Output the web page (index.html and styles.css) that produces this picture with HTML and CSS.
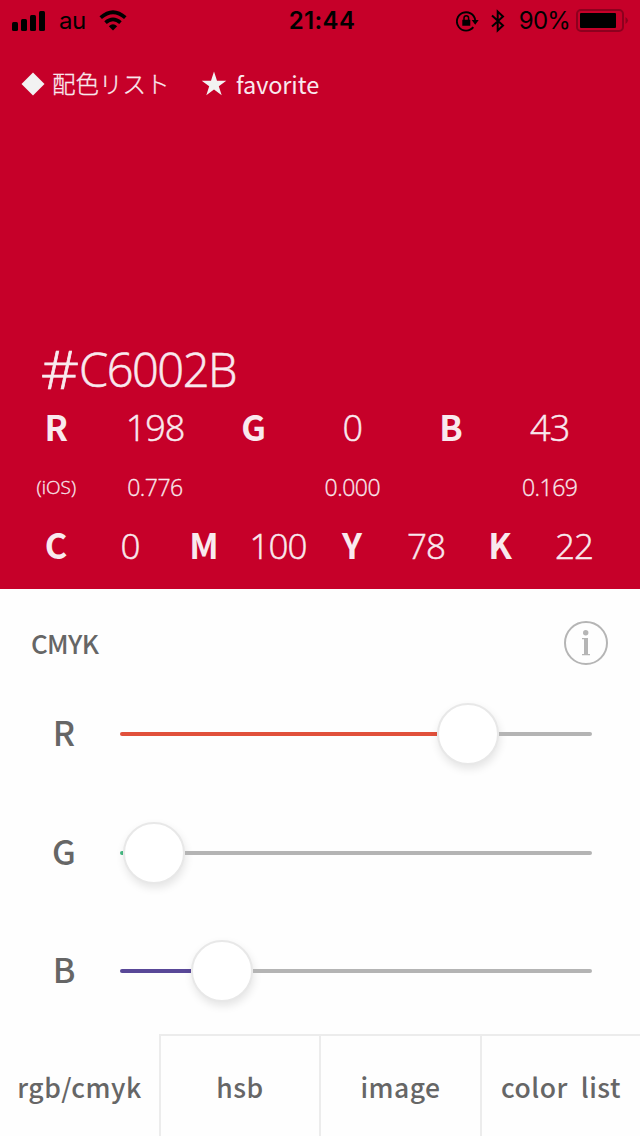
FILE: index.html
```html
<!DOCTYPE html>
<html lang="ja">
<head>
<meta charset="utf-8">
<title>Color</title>
<link rel="stylesheet" href="styles.css">
</head>
<body>
<div class="app">
  <section class="hero">
    <header class="status">
      <div class="status-left">
        <svg class="signal" width="34" height="20" viewBox="0 0 34 20"><rect x="0" y="11" width="6" height="9" rx="1.5"/><rect x="9" y="8" width="6" height="12" rx="1.5"/><rect x="18" y="4" width="6" height="16" rx="1.5"/><rect x="27" y="0" width="6" height="20" rx="1.5"/></svg>
        <span class="carrier">au</span>
        <svg class="wifi" width="28" height="21" viewBox="0 0 28 21"><path d="M14 20.5 9.8 16.2Q14 12.4 18.2 16.2Z"/><path d="M6.500 12.600Q14 6.100 21.500 12.600M1.700 7.700Q14-3.300 26.300 7.700" fill="none" stroke="#000" stroke-width="3.7"/></svg>
      </div>
      <span class="clock">21:44</span>
      <div class="status-right">
        <svg class="lock" width="24" height="22" viewBox="0 0 24 22"><path d="M17.300 17.200A9.200 9.200 0 1 1 19.200 10" fill="none" stroke="#000" stroke-width="1.9"/><path d="M15.700 10h7l-3.500 4.800zM6.300 9.700h8v6h-8z"/><path d="M8 10V8a2.300 2.300 0 0 1 4.600 0v2" fill="none" stroke="#000" stroke-width="1.5"/></svg>
        <svg class="bluetooth" width="16" height="24" viewBox="0 0 16 24"><path d="m2 6.500 11 10-5.300 5V2.500l5.300 5-11 10" fill="none" stroke="#000" stroke-width="2"/></svg>
        <span class="percent">90%</span>
        <svg class="battery" width="53" height="24" viewBox="0 0 53 24"><rect x="1" y="1" width="46" height="21" rx="4" fill="none" stroke="#8d001e" stroke-width="2"/><rect x="4" y="4" width="36" height="15" rx="1"/><path d="M49.500 8q5 3.500 0 7z" fill="#8d001e"/></svg>
      </div>
    </header>
    <nav class="links">
      <svg width="24" height="24" viewBox="0 0 24 24"><path d="m12 .5 11.500 11.500L12 23.500.5 12z" fill="#f2f2f2"/></svg>
      <span class="link-jp">配色リスト</span>
      <svg class="star" width="26" height="26" viewBox="0 0 26 26"><path d="m13 .5 3 9.200h9.300l-7.500 5.500 2.900 9-7.700-5.600-7.700 5.600 2.900-9L.7 9.700H10z" fill="#f2f2f2"/></svg>
      <span class="link-fav">favorite</span>
    </nav>
    <h1 class="hex"><span class="hash">#</span>C6002B</h1>
    <div class="row rgb"><b>R</b><span>198</span><b>G</b><span>0</span><b>B</b><span>43</span></div>
    <div class="row ios"><span class="note">(iOS)</span><span>0.776</span><i></i><span>0.000</span><i></i><span>0.169</span></div>
    <div class="row cmyk"><b>C</b><span>0</span><b>M</b><span>100</span><b>Y</b><span>78</span><b>K</b><span>22</span></div>
  </section>
  <main class="panel">
    <div class="heading">
      <h2 class="mode">CMYK</h2>
      <svg width="44" height="44" viewBox="0 0 44 44"><circle cx="22" cy="22" r="21" fill="none" stroke="#b5b5b5" stroke-width="2"/><circle cx="21.700" cy="11.800" r="2.700" fill="#b5b5b5"/><path d="M18 17h6v16h2v1.200h-8V33h2V18.200h-2z" fill="#b5b5b5"/></svg>
    </div>
    <div class="sliders">
      <div class="slider"><label>R</label><div class="track"><div class="fill red"></div><div class="knob"></div><div class="rest"></div></div></div>
      <div class="slider"><label>G</label><div class="track"><div class="fill green"></div><div class="knob"></div><div class="rest"></div></div></div>
      <div class="slider"><label>B</label><div class="track"><div class="fill blue"></div><div class="knob"></div><div class="rest"></div></div></div>
    </div>
  </main>
  <footer class="tabs">
    <div class="tab active">rgb/cmyk</div><div class="tab">hsb</div><div class="tab">image</div><div class="tab list">color&nbsp; list</div>
  </footer>
</div>
</body>
</html>
```
FILE: styles.css
```css
* { box-sizing: border-box; }
body { margin: 0; background: #fefefe; }
.app { width: 640px; height: 1136px; display: flex; flex-direction: column; overflow: hidden; }
svg { display: block; flex: none; }
.hero { height: 589px; flex: none; background: #c60029; color: #f9e9ee; display: flex; flex-direction: column; }
.status { height: 40px; padding: 0 12px; display: grid; grid-template-columns: 1fr auto 1fr; align-items: center; color: #000; font: 24px/40px Inter, sans-serif; }
.status-left, .status-right { display: flex; align-items: center; }
.status-right { justify-content: flex-end; margin-right: -1px; }
.carrier { margin-left: 13px; width: 28px; padding-top: 1px; letter-spacing: -.4px; }
.wifi { margin-left: 12px; }
.clock { font-weight: 600; font-size: 24px; letter-spacing: .4px; padding: 1px 0 0 4px; }
.bluetooth { margin-left: 10px; }
.percent { margin: 1px 6px 0 13px; letter-spacing: -.8px; }
.links { height: 87px; padding-left: 21px; display: flex; align-items: center; }
.link-jp { margin-left: 7px; width: 120px; font: 300 23.5px/40px "Noto Sans CJK JP", sans-serif; -webkit-text-stroke: .3px; margin-top: -2px; }
.star { margin-left: 29px; }
.link-fav { margin-left: 9px; font: 400 23.5px/40px "Noto Sans CJK JP", sans-serif; letter-spacing: -.1px; }
.hex { height: 60px; margin: 212px 0 0; padding-left: 41px; font: 300 47px/61px "Open Sans", sans-serif; letter-spacing: -1.5px; -webkit-text-stroke: .6px; }
.hash { display: inline-block; width: 28px; margin-right: 10px; transform: scale(1.25, 1.12); transform-origin: 0 54%; }
.row { display: grid; text-align: center; margin-left: 7px; width: 592px; grid-template-columns: repeat(6, 1fr); font: 300 36px/58px "Open Sans", sans-serif; height: 59px; letter-spacing: -1px; -webkit-text-stroke: .5px; }
.row b { font: 700 34.5px/54px "Noto Sans CJK JP", sans-serif; letter-spacing: 0; -webkit-text-stroke: 0; }
.ios { font-size: 23px; letter-spacing: -.5px; -webkit-text-stroke: .3px; }
.ios .note { font-size: 19px; letter-spacing: 0; }
.cmyk { grid-template-columns: repeat(8, 1fr); margin-left: 19px; font-size: 35px; }
.panel { flex: 1; color: #666; font-family: "Noto Sans CJK JP", sans-serif; }
.heading { height: 86px; padding: 22px 32px 0 31px; display: flex; justify-content: space-between; align-items: center; }
.mode { margin: 0; font-size: 26px; font-weight: 500; line-height: 44px; letter-spacing: -.7px; }
.sliders { display: grid; grid-template-rows: repeat(3, 118.5px); }
.slider { display: flex; align-items: center; }
.slider label { width: 128px; margin-right: -8px; text-align: center; font-size: 34px; font-weight: 500; line-height: 60px; padding-bottom: 4px; }
.track { width: 472px; display: flex; align-items: center; }
.fill { height: 4px; border-radius: 2px 0 0 2px; }
.rest { height: 4px; flex: 1; background: #b4b4b4; border-radius: 0 2px 2px 0; }
.red { width: 317px; background: #e1503b; }
.green { width: 3px; background: #45b982; }
.blue { width: 71px; background: #594898; }
.knob { width: 62px; height: 62px; border-radius: 50%; background: #fff; border: 2px solid #e8e8e8; box-shadow: 1px 4px 8px rgba(0,0,0,.1); }
.tabs { height: 102px; display: grid; grid-template-columns: 159px 160px 161px 160px; color: #666; font: 500 26.5px/101px "Noto Sans CJK JP", sans-serif; text-align: center; letter-spacing: .5px; }
.tab { border-top: 2px solid #ececec; border-left: 2px solid #ececec; }
.active { border-color: transparent; border-left: 0; }
```
